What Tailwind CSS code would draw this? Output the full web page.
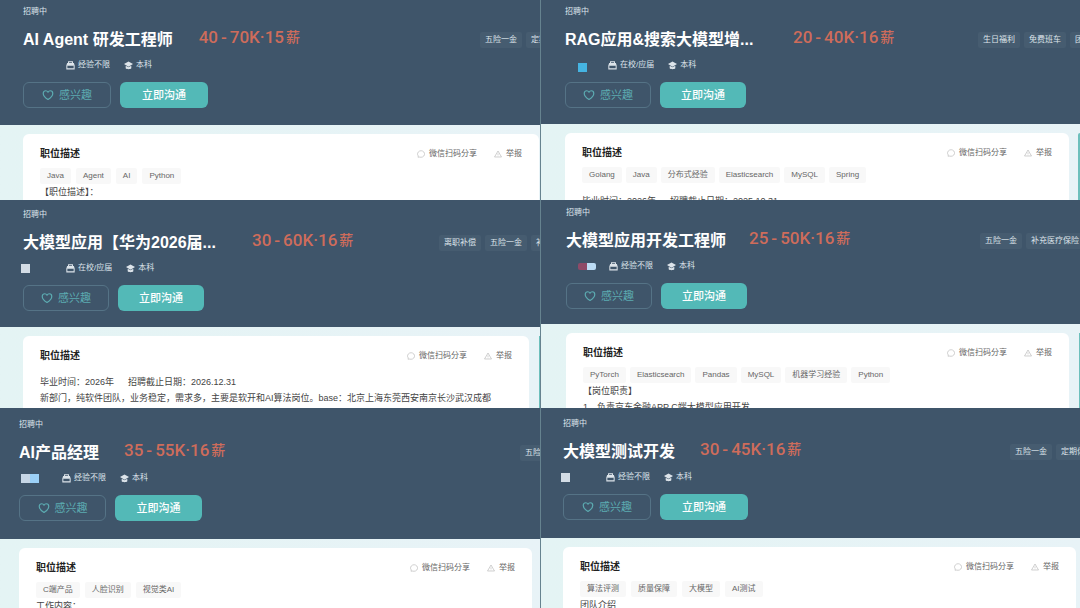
<!DOCTYPE html>
<html lang="zh-CN">
<head>
<meta charset="utf-8">
<meta name="viewport" content="width=device-width, initial-scale=1">
<title>大模型岗位招聘</title>
<script src="https://cdn.jsdelivr.net/npm/@tailwindcss/browser@4"></script>
</head>
<body class="bg-[#e6f3f5] font-['Liberation_Sans','Noto_Sans_CJK_SC',sans-serif] text-[8px] leading-4">
<svg class="hidden" aria-hidden="true">
  <symbol id="heart" viewBox="0 0 24 24"><path d="M12 21S2.500 15 2.500 8.800C2.500 5.400 4.900 3.500 7.400 3.500c2 0 3.600 1.100 4.600 2.900 1-1.800 2.600-2.900 4.600-2.900 2.500 0 4.900 1.900 4.900 5.300C21.500 15 12 21 12 21z" fill="none" stroke="currentColor" stroke-width="2.400" stroke-linejoin="round"/></symbol>
  <symbol id="case" viewBox="0 0 16 16"><path d="M4.500 4V1.500h7V4" fill="none" stroke="currentColor" stroke-width="1.800"/><path d="M2 3.500h12l1.500 5H.5z" fill="currentColor"/><path d="M1.500 8v6h13V8" fill="none" stroke="currentColor" stroke-width="1.800"/></symbol>
  <symbol id="cap" viewBox="0 0 16 16"><path d="M8 1l8 4.500L8 10 0 5.500z" fill="currentColor"/><path d="M3 8.500V13c2 2.200 8 2.200 10 0V8.500L8 11.300z" fill="currentColor"/></symbol>
  <symbol id="chat" viewBox="0 0 16 16"><path d="M4 14l-2 .5.600-2.500A7 6.500 0 1 1 8 14.500c-1.500 0-2.800-.200-4-.500z" fill="none" stroke="currentColor" stroke-width="1.400"/></symbol>
  <symbol id="warn" viewBox="0 0 16 16"><path d="M8 2l7 12H1z" fill="none" stroke="currentColor" stroke-width="1.400" stroke-linejoin="round"/><path d="M8 6.500v3.500M8 11.200v1.200" stroke="currentColor" stroke-width="1.200"/></symbol>
</svg>
<main id="jobs" class="grid min-h-screen grid-cols-2 grid-rows-[200px_208px_minmax(200px,1fr)] overflow-hidden"></main>
<script>
const jobs = [
  { title: 'AI Agent 研发工程师', pay: ['40', '70K·15'], exp: '经验不限', perks: ['五险一金', '定期'],
    tags: ['Java', 'Agent', 'AI', 'Python'], lines: ['【职位描述】：'],
    head: 'pl-[23px] pt-1 pb-[17px]', perkBox: 'w-[60px]', titleBox: '', payBox: 'ml-[26px]', btn: 'w-[88px]', tagGap: 'gap-[5px]', blocks: '', body: 'pl-[23px] pr-px', side: '', text: '' },
  { title: 'RAG应用&amp;搜索大模型增...', pay: ['20', '40K·16'], exp: '在校/应届', perks: ['生日福利', '免费班车', '团建'],
    tags: ['Golang', 'Java', '分布式经验', 'Elasticsearch', 'MySQL', 'Spring'],
    lines: ['毕业时间：2026年<span class="ml-[14px]">招聘截止日期：2025.10.31</span>'],
    head: 'pl-[24px] pt-1 pb-4', perkBox: 'w-[102px]', titleBox: 'w-[205px]', payBox: 'ml-[23px]', btn: 'w-[86px]', tagGap: 'gap-1',
    blocks: '<i class="ml-[13px] mt-1 size-[9px] bg-[#45b4e2]"></i>',
    body: 'pl-[24px]', side: 'ml-[9px] w-0.5 rounded-tl-sm', text: 'mt-[10px]' },
  { title: '大模型应用【华为2026届...', pay: ['30', '60K·16'], exp: '在校/应届', perks: ['离职补偿', '五险一金', '补充'],
    tags: [], lines: ['毕业时间：2026年<span class="ml-[14px]">招聘截止日期：2026.12.31</span>', '新部门，纯软件团队，业务稳定，需求多，主要是软开和AI算法岗位。base：北京上海东莞西安南京长沙武汉成都'],
    head: 'pl-[23px] pt-[7px] pb-4', perkBox: 'w-[101px]', titleBox: 'w-[206px]', payBox: 'ml-[23px]', btn: 'w-[86px]', tagGap: 'gap-1',
    blocks: '<i class="-ml-0.5 size-[9px] bg-[#d3dce5]"></i>',
    body: 'pl-[23px]', side: 'ml-[10px] w-px', text: 'mt-[10px]' },
  { title: '大模型应用开发工程师', pay: ['25', '50K·16'], exp: '经验不限', perks: ['五险一金', '补充医疗保险'],
    tags: ['PyTorch', 'Elasticsearch', 'Pandas', 'MySQL', '机器学习经验', 'Python'], lines: ['【岗位职责】', '1、负责京东金融APP C端大模型应用开发'],
    head: 'pl-[25px] pt-[5px] pb-[15px]', perkBox: 'w-[100px]', titleBox: '', payBox: 'ml-[23px]', btn: 'w-[86px]', tagGap: 'gap-1',
    blocks: '<i class="ml-3 h-[7px] w-[9px] rounded-l-[2px] bg-[#8e4a68]"></i><i class="h-[7px] w-[9px] rounded-r-[2px] bg-[#bcdcf5]"></i>',
    body: 'pl-[25px]', side: 'ml-[10px] w-px', text: '' },
  { title: 'AI产品经理', pay: ['35', '55K·16'], exp: '经验不限', perks: ['五险一金'],
    tags: ['C端产品', '人脸识别', '视觉类AI'], lines: ['工作内容：'],
    head: 'pl-[19px] pt-[9px] pb-[18px]', perkBox: 'w-[20px]', titleBox: '', payBox: 'ml-[25px]', btn: 'w-[87px]', tagGap: 'gap-[5px]',
    blocks: '<i class="ml-0.5 size-[9px] bg-[#c6d6e6]"></i><i class="size-[9px] bg-[#9bd0f7]"></i>',
    body: 'pl-[19px] pr-2', side: '', text: '' },
  { title: '大模型测试开发', pay: ['30', '45K·16'], exp: '经验不限', perks: ['五险一金', '定期体'],
    tags: ['算法评测', '质量保障', '大模型', 'AI测试'], lines: ['团队介绍'],
    head: 'pl-[22px] pt-2 pb-[18px]', perkBox: 'w-[70px]', titleBox: '', payBox: 'ml-[25px]', btn: 'w-[88px]', tagGap: 'gap-[5px]',
    blocks: '<i class="-ml-0.5 size-[9px] bg-[#d3dce5]"></i>',
    body: 'pl-[22px] pr-1', side: '', text: '' },
];
const icon = (id, cls) => `<svg class="${cls}" aria-hidden="true"><use href="#${id}"/></svg>`;
document.getElementById('jobs').innerHTML = jobs.map((j, n) => `
<article class="flex min-w-0 flex-col overflow-hidden whitespace-nowrap bg-linear-to-r from-[#e4f4f4] to-[#e8f3f7] ${n % 2 ? 'border-l border-[#66838f]' : ''}">
  <header class="bg-[#3f556a] text-[#dde4ea] ${j.head}">
    <p>招聘中</p>
    <div class="mt-2 flex h-6 items-center">
      <h2 class="shrink-0 text-base font-bold text-white ${j.titleBox}">${j.title}</h2>
      <p class="flex shrink-0 items-center pb-1.5 font-['Roboto','Noto_Sans_CJK_SC',sans-serif] text-[17px] font-medium text-[#ce6c5b] ${j.payBox}">${j.pay[0]}<span class="px-[3px]">-</span>${j.pay[1]}<span class="ml-0.5 text-[14px]">薪</span></p>
      <ul class="ml-auto flex shrink-0 gap-1 overflow-hidden ${j.perkBox}">
        ${j.perks.map(p => `<li class="shrink-0 rounded-[2px] bg-[#465c70] px-[5px]">${p}</li>`).join('')}
      </ul>
    </div>
    <div class="mt-[5px] flex h-4 items-center">
      <span class="flex w-[43px] items-center">${j.blocks}</span>
      ${icon('case', 'mr-[3px] size-[9px]')}<span>${j.exp}</span>
      ${icon('cap', 'ml-[14px] mr-[3px] size-[9px]')}<span>本科</span>
    </div>
    <div class="mt-[9px] flex h-[26px] gap-[9px] text-[11px]">
      <button type="button" class="flex items-center justify-center gap-[5px] rounded-md border border-[#557386] text-[#5cabb1] ${j.btn}">${icon('heart', 'size-3')}感兴趣</button>
      <button type="button" class="rounded-md bg-[#53b9b7] font-medium text-white ${j.btn}">立即沟通</button>
    </div>
  </header>
  <div class="flex flex-1 pt-[9px] ${j.body}">
    <section class="min-w-0 flex-1 rounded-t-md bg-white px-[17px] pt-3 text-[#444]">
      <div class="flex items-center">
        <h3 class="mr-auto text-[10px] font-bold text-[#222]">职位描述</h3>
        <a href="#" class="flex items-center gap-1 text-[#666]">${icon('chat', 'size-2 text-[#bbb]')}微信扫码分享</a>
        <a href="#" class="ml-[17px] flex items-center gap-1 text-[#666]">${icon('warn', 'size-2 text-[#bbb]')}举报</a>
      </div>
      ${j.tags.length ? `<ul class="mt-[6px] flex text-[#666] ${j.tagGap}">${j.tags.map(t => `<li class="rounded-[2px] bg-[#f8f8f8] px-[7px]">${t}</li>`).join('')}</ul>` : ''}
      <div class="text-[9px] leading-4 ${j.text}">${j.lines.map(l => `<p>${l}</p>`).join('')}</div>
    </section>
    ${j.side ? `<div class="bg-[#6dbfbc] ${j.side}"></div>` : ''}
  </div>
</article>`).join('');
</script>
</body>
</html>
